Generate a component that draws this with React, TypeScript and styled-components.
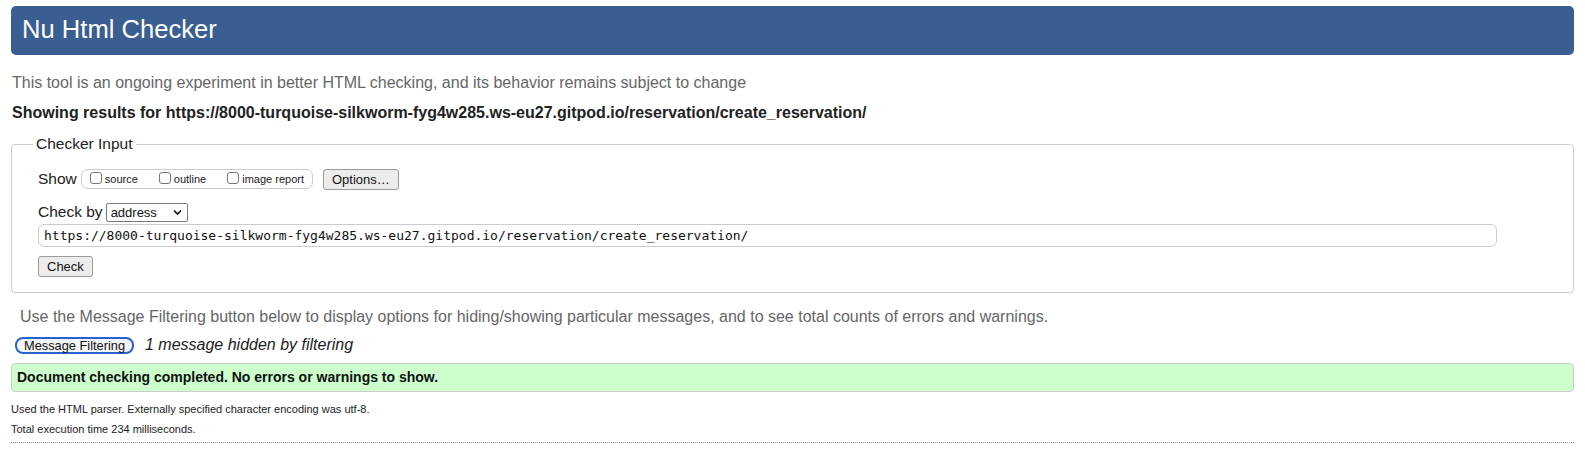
import React from "react";
import styled, { createGlobalStyle } from "styled-components";

const GlobalStyle = createGlobalStyle`
  html, body { margin: 0; padding: 0; background: #fff; }
  body { font-family: "Liberation Sans", Arial, Helvetica, sans-serif; color: #222; }
  * { box-sizing: border-box; }
`;

const Page = styled.div`
  padding: 6px 11px 0;
`;

const Header = styled.h1`
  margin: 0;
  height: 49px;
  padding: 0 11px 3px;
  line-height: 46px;
  background: #3b5e92;
  color: #fff;
  border-radius: 5px;
  font-size: 25.6px;
  font-weight: normal;
`;

const Intro = styled.p`
  margin: 18px 0 0;
  padding-left: 1px;
  font-size: 16px;
  line-height: 20px;
  color: #666;
`;

const Results = styled.p`
  margin: 10px 0 0;
  padding-left: 1px;
  font-size: 16px;
  line-height: 20px;
  font-weight: bold;
  color: #222;
`;

const Fieldset = styled.fieldset`
  margin: 12px 0 0;
  padding: 15px 76px 15px 21px;
  border: 1px solid #ccc;
  border-radius: 4px;
  min-width: 0;
`;

const Legend = styled.legend`
  padding: 0 3px;
  font-size: 15.5px;
  line-height: 18px;
  color: #222;
`;

const Row = styled.div<{ $mt?: number; $h?: number }>`
  display: flex;
  align-items: center;
  padding-left: 5px;
  margin-top: ${(p) => p.$mt ?? 0}px;
  height: ${(p) => (p.$h ? `${p.$h}px` : "auto")};
`;

const Label = styled.span`
  font-size: 15.5px;
  line-height: 18px;
  color: #222;
`;

const CheckGroup = styled.div`
  display: flex;
  align-items: center;
  height: 20px;
  margin-left: 4px;
  padding: 0 8px 0 8px;
  border: 1px solid #ccc;
  border-radius: 7px;
`;

const CheckLabel = styled.label<{ $last?: boolean }>`
  display: inline-flex;
  align-items: center;
  font-size: 11px;
  color: #222;
  margin-right: ${(p) => (p.$last ? 0 : 21)}px;
`;

const Box = styled.input`
  appearance: none;
  -webkit-appearance: none;
  width: 12px;
  height: 12px;
  margin: -2px 3px 0 0;
  border: 1px solid #777;
  border-radius: 3px;
  background: #fff;
`;

const Button = styled.button<{ $ml?: number }>`
  height: 21px;
  padding: 0 8px;
  margin-left: ${(p) => p.$ml ?? 0}px;
  font-family: "Liberation Sans", Arial, sans-serif;
  font-size: 13px;
  color: #111;
  background: #ececec;
  border: 1px solid #9a9a9a;
  border-radius: 3px;
`;

const SelectWrap = styled.div`
  position: relative;
  margin-left: 3px;
  width: 82px;
  height: 19px;
`;

const Select = styled.select`
  appearance: none;
  -webkit-appearance: none;
  width: 100%;
  height: 100%;
  padding: 0 0 0 4px;
  font-family: "Liberation Sans", Arial, sans-serif;
  font-size: 13px;
  color: #111;
  background: #fff;
  border: 1px solid #7a7a7a;
  border-radius: 2px;
`;

const Chevron = styled.svg`
  position: absolute;
  right: 6px;
  top: 6px;
  pointer-events: none;
`;

const UrlInput = styled.input`
  width: 100%;
  height: 23px;
  padding: 0 5px;
  font-family: "DejaVu Sans Mono", "Liberation Mono", monospace;
  font-size: 13px;
  color: #111;
  border: 1px solid #ccc;
  border-radius: 6px;
`;

const FilterIntro = styled.p`
  margin: 14px 0 0;
  padding-left: 9px;
  font-size: 16px;
  line-height: 20px;
  color: #666;
`;

const FilterRow = styled.div`
  display: flex;
  align-items: center;
  height: 20px;
  margin-top: 8px;
  padding-left: 4px;
`;

const FilterButton = styled.button`
  height: 17px;
  padding: 0 7px;
  font-family: "Liberation Sans", Arial, sans-serif;
  font-size: 12.8px;
  line-height: 13px;
  color: #111;
  background: #f4f4f4;
  border: 2px solid #2563cf;
  border-radius: 8px;
`;

const Hidden = styled.em`
  margin-left: 11px;
  font-size: 16px;
  color: #222;
`;

const Success = styled.div`
  margin-top: 8px;
  padding: 5px 5px;
  font-size: 14px;
  line-height: 17px;
  font-weight: bold;
  color: #111;
  background: #ccffcc;
  border: 1px solid #ccc;
  border-radius: 4px;
`;

const Details = styled.div`
  margin-top: 7px;
`;

const Small = styled.p`
  margin: 0;
  font-size: 11px;
  line-height: 20px;
  color: #222;
`;

const Divider = styled.hr`
  margin: 3px 0 0;
  border: 0;
  border-top: 1px dotted #888;
`;

const url =
  "https://8000-turquoise-silkworm-fyg4w285.ws-eu27.gitpod.io/reservation/create_reservation/";

export default function App() {
  return (
    <>
      <GlobalStyle />
      <Page>
        <Header>Nu Html Checker</Header>
        <Intro>
          This tool is an ongoing experiment in better HTML checking, and its behavior remains subject to change
        </Intro>
        <Results>Showing results for {url}</Results>
        <Fieldset>
          <Legend>Checker Input</Legend>
          <Row $h={22}>
            <Label>Show</Label>
            <CheckGroup>
              <CheckLabel>
                <Box type="checkbox" />
                source
              </CheckLabel>
              <CheckLabel>
                <Box type="checkbox" />
                outline
              </CheckLabel>
              <CheckLabel $last>
                <Box type="checkbox" />
                image report
              </CheckLabel>
            </CheckGroup>
            <Button $ml={10}>Options…</Button>
          </Row>
          <Row $mt={11} $h={22}>
            <Label>Check by</Label>
            <SelectWrap>
              <Select defaultValue="address">
                <option value="address">address</option>
                <option value="file">file upload</option>
                <option value="text">text input</option>
              </Select>
              <Chevron width="9" height="7" viewBox="0 0 9 7">
                <path d="M1 1.5 L4.5 5 L8 1.5" fill="none" stroke="#111" strokeWidth="1.6" />
              </Chevron>
            </SelectWrap>
          </Row>
          <Row $mt={1}>
            <UrlInput type="url" defaultValue={url} />
          </Row>
          <Row $mt={9}>
            <Button>Check</Button>
          </Row>
        </Fieldset>
        <FilterIntro>
          Use the Message Filtering button below to display options for hiding/showing particular messages, and to see total counts of errors and warnings.
        </FilterIntro>
        <FilterRow>
          <FilterButton>Message Filtering</FilterButton>
          <Hidden>1 message hidden by filtering</Hidden>
        </FilterRow>
        <Success>Document checking completed. No errors or warnings to show.</Success>
        <Details>
          <Small>Used the HTML parser. Externally specified character encoding was utf-8.</Small>
          <Small>Total execution time 234 milliseconds.</Small>
        </Details>
        <Divider />
      </Page>
    </>
  );
}
